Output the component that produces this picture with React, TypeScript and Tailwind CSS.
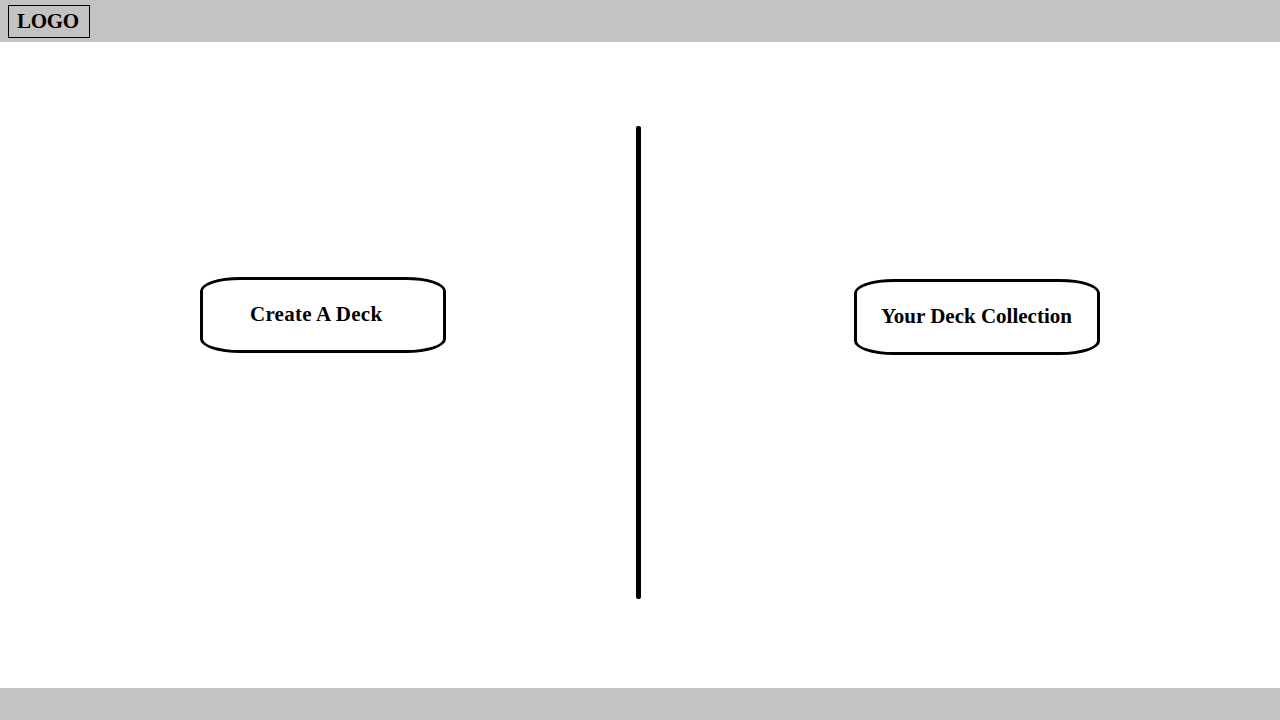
function DeckButton({ label, className }: { label: string; className: string }) {
  return (
    <button
      className={`h-[76px] w-[246px] rounded-[40px/14px] border-[3px] border-black bg-white pb-[2px] text-left text-[21px] leading-6 font-bold whitespace-nowrap ${className}`}
    >
      {label}
    </button>
  );
}

export default function App() {
  return (
    <div className="flex h-[720px] w-[1280px] flex-col overflow-hidden bg-white font-['Liberation_Serif',serif] text-black">
      <header className="h-[42px] shrink-0 bg-[#c3c3c3] pt-[5px] pl-2">
        <div className="h-[33px] w-[82px] border border-black pt-[3px] pl-2 text-[21px] leading-6 font-bold tracking-[-0.3px]">
          LOGO
        </div>
      </header>
      <main className="flex flex-1 items-start">
        <section className="w-[636px] shrink-0 pt-[235px] pl-[200px]">
          <DeckButton label="Create A Deck" className="pl-[47px] tracking-[0.25px]" />
        </section>
        <div className="mt-[84px] h-[473px] w-[5px] shrink-0 rounded-[2px] bg-black" />
        <section className="flex-1 pt-[237px] pl-[213px]">
          <DeckButton label="Your Deck Collection" className="pl-[24px]" />
        </section>
      </main>
      <footer className="h-8 shrink-0 bg-[#c3c3c3]" />
    </div>
  );
}
